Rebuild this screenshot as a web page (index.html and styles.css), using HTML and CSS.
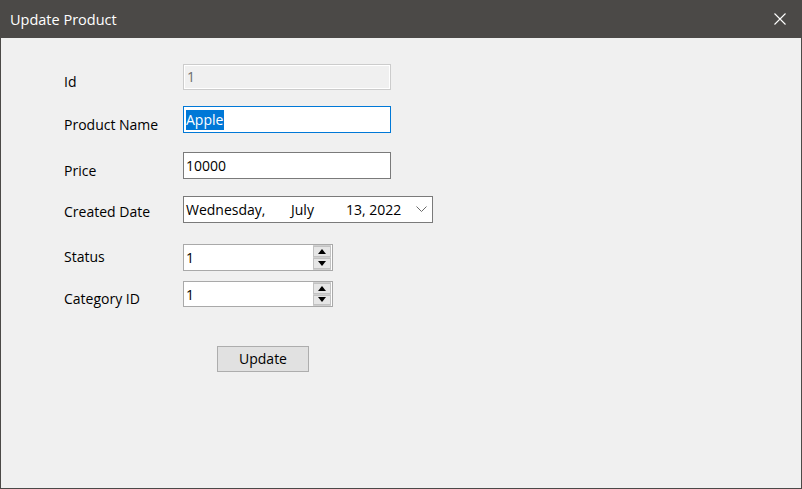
FILE: index.html
```html
<!DOCTYPE html>
<html lang="en">
<head>
<meta charset="utf-8">
<title>Update Product</title>
<link rel="stylesheet" href="styles.css">
</head>
<body>
<div class="window">
  <div class="titlebar">
    <span class="title">Update Product</span>
    <span class="close">
      <svg width="12" height="12" viewBox="0 0 12 12"><path d="M0.5 0.5 L11.5 11.5 M11.5 0.5 L0.5 11.5" stroke="#ffffff" stroke-width="1.1" fill="none"/></svg>
    </span>
  </div>
  <div class="content">
    <div class="row row-id">
      <span class="lbl">Id</span>
      <div class="field field-disabled">1</div>
    </div>
    <div class="row row-name">
      <span class="lbl">Product Name</span>
      <div class="field field-focus"><span class="sel">Apple</span></div>
    </div>
    <div class="row row-price">
      <span class="lbl">Price</span>
      <div class="field">10000</div>
    </div>
    <div class="row row-date">
      <span class="lbl lbl-date">Created Date</span>
      <div class="field field-date">
        <span class="d-day">Wednesday,</span>
        <span class="d-month">July</span>
        <span class="d-year">13, 2022</span>
        <svg class="chev" width="11" height="7" viewBox="0 0 11 7"><path d="M0.5 0.5 L5.5 5.5 L10.5 0.5" stroke="#6a6a6a" stroke-width="1" fill="none"/></svg>
      </div>
    </div>
    <div class="row row-status">
      <span class="lbl lbl-status">Status</span>
      <div class="field field-spin">
        <span class="spin-val">1</span>
        <div class="spin">
          <div class="spin-btn"><svg width="8" height="5" viewBox="0 0 8 5"><path d="M4 0 L8 5 L0 5 Z" fill="#000"/></svg></div>
          <div class="spin-btn"><svg width="8" height="5" viewBox="0 0 8 5"><path d="M0 0 L8 0 L4 5 Z" fill="#000"/></svg></div>
        </div>
      </div>
    </div>
    <div class="row row-cat">
      <span class="lbl">Category ID</span>
      <div class="field field-spin field-spin-cat">
        <span class="spin-val">1</span>
        <div class="spin">
          <div class="spin-btn"><svg width="8" height="5" viewBox="0 0 8 5"><path d="M4 0 L8 5 L0 5 Z" fill="#000"/></svg></div>
          <div class="spin-btn"><svg width="8" height="5" viewBox="0 0 8 5"><path d="M0 0 L8 0 L4 5 Z" fill="#000"/></svg></div>
        </div>
      </div>
    </div>
    <div class="actions">
      <button class="btn" type="button">Update</button>
    </div>
  </div>
</div>
</body>
</html>
```

FILE: styles.css
```css
html, body {
  margin: 0;
  padding: 0;
  background: #f0f0f0;
}

body {
  font-family: "Open Sans", "Noto Sans", "Liberation Sans", sans-serif;
  color: #000;
}

.window {
  width: 802px;
  height: 489px;
  box-sizing: border-box;
  border: 1px solid #4b4947;
  border-top: none;
  background: #f0f0f0;
  display: flex;
  flex-direction: column;
}

.titlebar {
  height: 38px;
  margin: 0 -1px;
  background: #4b4947;
  display: flex;
  align-items: center;
  justify-content: space-between;
  padding: 0 16px 0 10px;
  box-sizing: border-box;
}

.title {
  color: #ffffff;
  font-size: 14.5px;
}

.close {
  display: flex;
  width: 12px;
  height: 12px;
  margin-top: -1px;
}

.content {
  padding: 26px 0 0 63px;
  display: flex;
  flex-direction: column;
}

.row {
  display: flex;
  align-items: center;
}

.lbl {
  width: 119px;
  font-size: 14px;
  line-height: 16px;
  padding-top: 10px;
  box-sizing: border-box;
  white-space: nowrap;
}

.lbl-date {
  padding-top: 5px;
}

.lbl-status {
  padding-top: 0;
  padding-bottom: 1px;
}

.field {
  width: 208px;
  height: 27px;
  box-sizing: border-box;
  border: 1px solid #7a7a7a;
  background: #ffffff;
  font-size: 14px;
  padding-left: 2px;
  padding-bottom: 1px;
  display: flex;
  align-items: center;
  white-space: nowrap;
}

.row-id .field { height: 26px; }
.row-name { margin-top: 16px; }
.row-price { margin-top: 19px; }
.row-date { margin-top: 17px; }
.row-status { margin-top: 21px; }
.row-cat { margin-top: 10px; }

.field-disabled {
  background: #f0f0f0;
  border-color: #cccccc;
  box-shadow: inset 0 0 0 1px #ffffff;
  color: #6d6d6d;
  padding-left: 3px;
}

.field-focus {
  border-color: #0078d7;
  padding-bottom: 0;
}

.sel {
  background: #0078d7;
  color: #ffffff;
  line-height: 20px;
  padding-right: 1px;
}

.field-date {
  width: 250px;
}

.d-day {
  width: 105px;
}

.d-month {
  width: 55px;
}

.chev {
  margin-left: auto;
  margin-right: 5px;
  margin-top: 1px;
}

.field-spin {
  width: 150px;
  border-color: #a9a9a9;
  padding-right: 1px;
  padding-bottom: 0;
}

.field-spin-cat {
  height: 26px;
}

.spin-val {
  flex: 1;
}

.spin {
  width: 18px;
  align-self: stretch;
  display: flex;
  flex-direction: column;
  gap: 1px;
  padding: 1px 0;
  background: #cfcfcf;
  box-sizing: border-box;
}

.spin-btn {
  flex: 1;
  background: #e6e6e6;
  border: 1px solid #c2c2c2;
  display: flex;
  align-items: center;
  justify-content: center;
}

.actions {
  margin-top: 39px;
  padding-left: 153px;
}

.btn {
  width: 92px;
  height: 26px;
  box-sizing: border-box;
  border: 1px solid #adadad;
  background: #e1e1e1;
  font-family: "Open Sans", "Noto Sans", "Liberation Sans", sans-serif;
  font-size: 14px;
  line-height: 18px;
  color: #000;
  padding: 0 0 1px;
  margin: 0;
}
```
